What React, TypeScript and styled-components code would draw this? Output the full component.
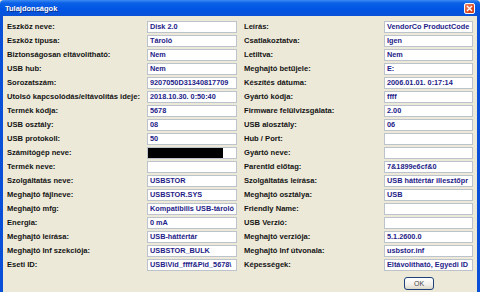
import React from 'react'
import styled, { createGlobalStyle } from 'styled-components'

interface Field {
  label: string
  value?: string
  redacted?: boolean
}

const leftFields: Field[] = [
  { label: 'Eszköz neve:', value: 'Disk 2.0' },
  { label: 'Eszköz típusa:', value: 'Tároló' },
  { label: 'Biztonságosan eltávolítható:', value: 'Nem' },
  { label: 'USB hub:', value: 'Nem' },
  { label: 'Sorozatszám:', value: '9207050D31340817709' },
  { label: 'Utolsó kapcsolódás/eltávolítás ideje:', value: '2018.10.30. 0:50:40' },
  { label: 'Termék kódja:', value: '5678' },
  { label: 'USB osztály:', value: '08' },
  { label: 'USB protokoll:', value: '50' },
  { label: 'Számítógép neve:', redacted: true },
  { label: 'Termék neve:' },
  { label: 'Szolgáltatás neve:', value: 'USBSTOR' },
  { label: 'Meghajtó fájlneve:', value: 'USBSTOR.SYS' },
  { label: 'Meghajtó mfg:', value: 'Kompatibilis USB-tároló' },
  { label: 'Energia:', value: '0 mA' },
  { label: 'Meghajtó leírása:', value: 'USB-háttértár' },
  { label: 'Meghajtó Inf szekciója:', value: 'USBSTOR_BULK' },
  { label: 'Eseti ID:', value: 'USB\\Vid_ffff&Pid_5678\\' },
]

const rightFields: Field[] = [
  { label: 'Leírás:', value: 'VendorCo ProductCode' },
  { label: 'Csatlakoztatva:', value: 'Igen' },
  { label: 'Letiltva:', value: 'Nem' },
  { label: 'Meghajtó betűjele:', value: 'E:' },
  { label: 'Készítés dátuma:', value: '2006.01.01. 0:17:14' },
  { label: 'Gyártó kódja:', value: 'ffff' },
  { label: 'Firmware felülvizsgálata:', value: '2.00' },
  { label: 'USB alosztály:', value: '06' },
  { label: 'Hub / Port:' },
  { label: 'Gyártó neve:' },
  { label: 'ParentId előtag:', value: '7&1899e6cf&0' },
  { label: 'Szolgáltatás leírása:', value: 'USB háttértár illesztőpr' },
  { label: 'Meghajtó osztálya:', value: 'USB' },
  { label: 'Friendly Name:' },
  { label: 'USB Verzió:' },
  { label: 'Meghajtó verziója:', value: '5.1.2600.0' },
  { label: 'Meghajtó Inf útvonala:', value: 'usbstor.inf' },
  { label: 'Képességek:', value: 'Eltávolítható, Egyedi ID' },
]

const GlobalStyle = createGlobalStyle`
  html, body {
    margin: 0;
    padding: 0;
    background: #ece9d8;
  }
  body {
    font-family: 'Liberation Sans', Arial, sans-serif;
  }
`

const Window = styled.div`
  width: 480px;
  height: 292px;
  display: flex;
  flex-direction: column;
  overflow: hidden;
`
const TitleBar = styled.div`
  flex: 0 0 16px;
  display: flex;
  align-items: center;
  padding: 0 5px;
  background: linear-gradient(#3d8bf4 0%, #0b62e6 18%, #0055e5 55%, #0a52d6 100%);
  border-radius: 4px 4px 0 0;
`
const Title = styled.span`
  color: #fff;
  font-size: 7.5px;
  font-weight: bold;
  text-shadow: 1px 1px 0 #0a2f8a;
`
const CloseButton = styled.span`
  margin-left: auto;
  width: 11px;
  height: 11px;
  box-sizing: border-box;
  border: 1px solid #fff;
  border-radius: 2px;
  background: linear-gradient(135deg, #f08a6c, #d9421b 70%);
  display: flex;
  align-items: center;
  justify-content: center;
`
const Body = styled.div`
  flex: 1;
  background: #ece9d8;
  border-left: 3px solid #0a4fd8;
  border-right: 3px solid #0a4fd8;
  padding: 5px 4px 0;
  display: flex;
  flex-direction: column;
`
const Columns = styled.div`
  display: flex;
  gap: 7px;
`
const Column = styled.div<{ $valueWidth: number }>`
  display: grid;
  grid-template-columns: 140px ${p => p.$valueWidth}px;
  grid-auto-rows: 12px;
  row-gap: 2px;
`
const Label = styled.span`
  font-size: 7.6px;
  font-weight: bold;
  line-height: 12px;
  color: #141414;
  white-space: nowrap;
  overflow: hidden;
`
const ValueBox = styled.span`
  display: block;
  height: 12px;
  box-sizing: border-box;
  border: 1px solid #bcc3cc;
  background: #fff;
  padding: 0 2px;
  font-size: 7.3px;
  font-weight: bold;
  line-height: 10px;
  color: #1e2288;
  white-space: nowrap;
  overflow: hidden;
`
const Redacted = styled.span`
  display: inline-block;
  vertical-align: top;
  width: 75px;
  height: 10px;
  margin-left: -2px;
  background: #000;
`
const ButtonRow = styled.div`
  display: flex;
  justify-content: flex-end;
  padding-right: 39px;
  margin-top: 6px;
`
const OkButton = styled.button`
  width: 30px;
  height: 13px;
  padding: 0;
  border: 1px solid #1d3f7a;
  border-radius: 3px;
  background: linear-gradient(#ffffff, #f1f0ea 60%, #dcd8c8);
  font-family: 'Liberation Sans', Arial, sans-serif;
  font-size: 7px;
  color: #444;
`

const FieldColumn = ({ fields, valueWidth }: { fields: Field[]; valueWidth: number }) => (
  <Column $valueWidth={valueWidth}>
    {fields.map(f => (
      <React.Fragment key={f.label}>
        <Label>{f.label}</Label>
        <ValueBox>{f.redacted ? <Redacted /> : f.value}</ValueBox>
      </React.Fragment>
    ))}
  </Column>
)

export default function App() {
  return (
    <Window>
      <GlobalStyle />
      <TitleBar>
        <Title>Tulajdonságok</Title>
        <CloseButton>
          <svg width="7" height="7" viewBox="0 0 7 7">
            <path d="M1 1 L6 6 M6 1 L1 6" stroke="#fff" strokeWidth="1.4" />
          </svg>
        </CloseButton>
      </TitleBar>
      <Body>
        <Columns>
          <FieldColumn fields={leftFields} valueWidth={90} />
          <FieldColumn fields={rightFields} valueWidth={89} />
        </Columns>
        <ButtonRow>
          <OkButton>OK</OkButton>
        </ButtonRow>
      </Body>
    </Window>
  )
}
